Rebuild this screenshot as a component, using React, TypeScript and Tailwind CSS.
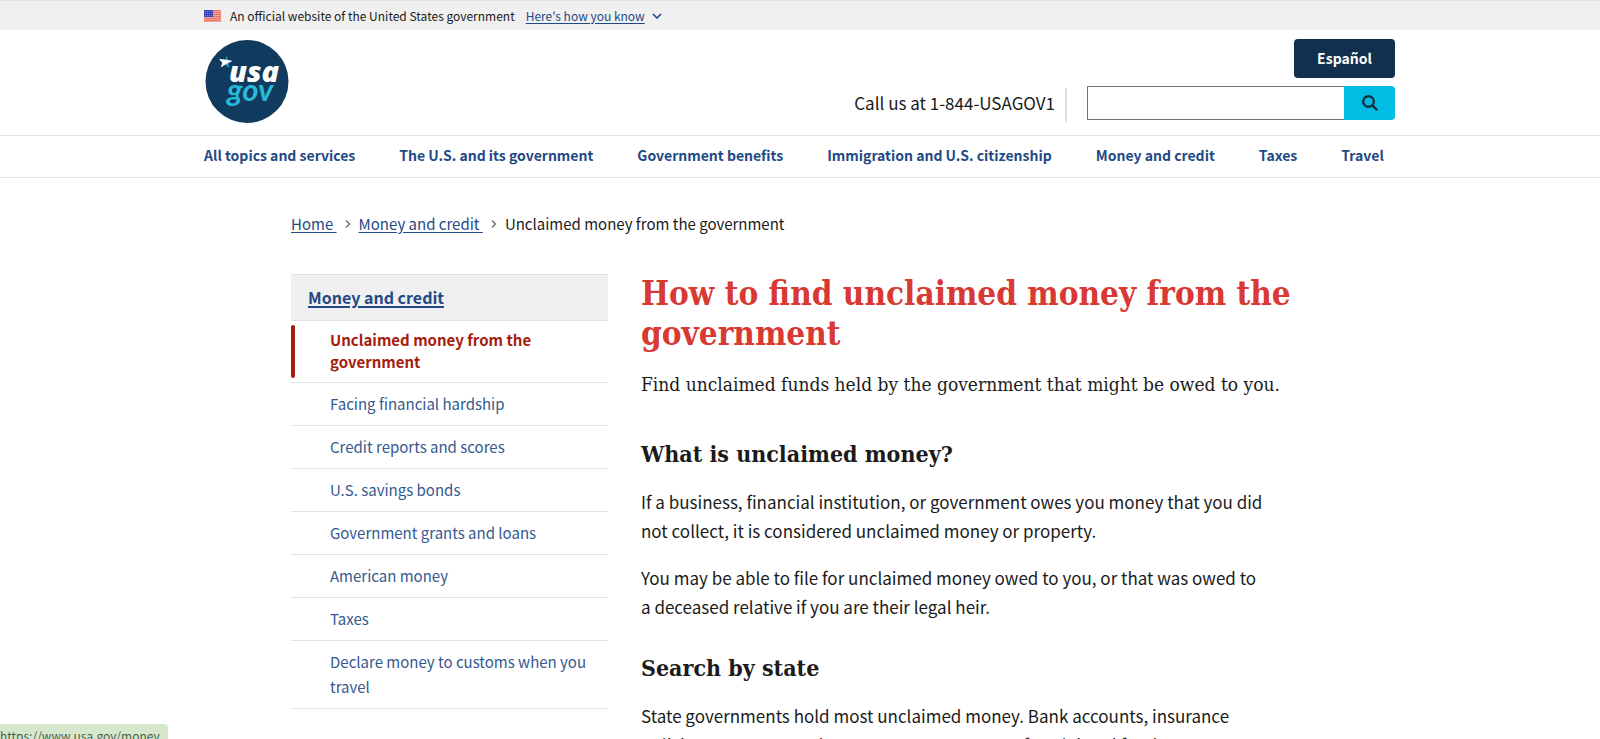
import React from "react";

const navLinks = [
  "All topics and services",
  "The U.S. and its government",
  "Government benefits",
  "Immigration and U.S. citizenship",
  "Money and credit",
  "Taxes",
  "Travel",
];

const sideLinks = [
  "Facing financial hardship",
  "Credit reports and scores",
  "U.S. savings bonds",
  "Government grants and loans",
  "American money",
  "Taxes",
  "Declare money to customs when you travel",
];

const serif = "font-['DejaVu_Serif_Condensed','DejaVu_Serif',serif]";

function Flag() {
  return (
    <svg className="h-3 w-[17px] shrink-0" viewBox="0 0 17 12" aria-hidden="true">
      <rect width="17" height="12" fill="#f6cfc9" />
      {[0, 2, 4, 6, 8, 10].map((y) => (
        <rect key={y} y={y + 0.2} width="17" height="1.2" fill="#e8604f" />
      ))}
      <rect width="9" height="7" fill="#3a46b8" />
      {[1.5, 3.5, 5.5].map((y) =>
        [1.5, 3.5, 5.5, 7.5].map((x) => <circle key={`${x}-${y}`} cx={x} cy={y} r="0.4" fill="#c9cdf2" />)
      )}
    </svg>
  );
}

function Logo() {
  return (
    <svg className="size-[84px]" viewBox="0 0 84 84" role="img" aria-label="USAGov">
      <circle cx="42" cy="42.500" r="41.500" fill="#113a5f" />
      <path d="M21.500 16l1.600 5 3.900.2-3.300 3 .3 4.600-3.500-2.800z" fill="#29a3c4" />
      <path d="M14 20l6 .6 7.500 1.400-5.500 2.600-6.200 4 1.500-4.800z" fill="#fff" />
      <text x="24" y="43" fontSize="29" fontWeight="800" fontStyle="italic" fill="#fff" fontFamily="'Open Sans', sans-serif">usa</text>
      <text x="22" y="62" fontSize="31" fontWeight="700" fontStyle="italic" fill="#29b9d8" fontFamily="Lato, sans-serif">gov</text>
    </svg>
  );
}

function Separator() {
  return (
    <svg className="mx-2 h-2 w-1.5" viewBox="0 0 6 8" fill="none" stroke="#71767a" strokeWidth="1.5" aria-hidden="true">
      <path d="M1 .5l3.500 3.500L1 7.500" />
    </svg>
  );
}

export default function App() {
  return (
    <div className="relative h-screen overflow-hidden bg-white font-['Noto_Sans_CJK_SC',sans-serif] text-[#1b1b1b]">
      <div className="h-[30px] border-t border-[#dfe1e2] bg-[#f0f0f0]">
        <div className="mx-auto flex h-full max-w-[1192px] items-center text-xs">
          <Flag />
          <p className="ml-[9px]">An official website of the United States government</p>
          <button type="button" className="ml-[11px] flex items-center gap-[7px] text-[#1f4a85]">
            <span className="underline underline-offset-2">Here's how you know</span>
            <svg className="h-1.5 w-2.5" viewBox="0 0 10 6" fill="none" stroke="#1f4a85" strokeWidth="1.6" aria-hidden="true">
              <path d="M1 1l4 4 4-4" />
            </svg>
          </button>
        </div>
      </div>

      <header>
        <div className="mx-auto flex h-[105px] max-w-[1192px] justify-between pt-[9px]">
          <a href="#home" className="ml-px h-[84px]">
            <Logo />
          </a>
          <div className="mr-px flex flex-col items-end">
            <button type="button" className="h-[39px] w-[101px] rounded bg-[#112f4e] pb-0.5 text-sm font-bold text-white">
              Español
            </button>
            <div className="mt-2 flex items-start">
              <p className="mt-0.5 flex h-[34px] items-center border-r-2 border-[#dfe1e2] pr-2.5 pb-1 text-[17px]">
                Call us at 1-844-USAGOV1
              </p>
              <form className="ml-5 flex h-[34px]" role="search">
                <input type="search" aria-label="Search" className="w-[257px] border border-r-0 border-[#71767a] px-2 outline-none" />
                <button type="button" aria-label="Search" className="flex w-[51px] items-center justify-center rounded-r bg-[#00bde3]">
                  <svg className="size-4" viewBox="0 0 16 16" fill="none" stroke="#13303f" strokeWidth="2.400" aria-hidden="true">
                    <circle cx="6.500" cy="6.500" r="5.300" />
                    <path d="M10.300 10.300l4.900 4.900" />
                  </svg>
                </button>
              </form>
            </div>
          </div>
        </div>
        <nav aria-label="Primary" className="h-[43px] border-y border-[#dfe1e2]">
          <ul className="mx-auto flex h-full max-w-[1192px] items-center gap-11 pb-1 text-sm font-bold text-[#1f4a85]">
            {navLinks.map((t) => (
              <li key={t}>
                <a href="#topic" className="whitespace-nowrap">{t}</a>
              </li>
            ))}
          </ul>
        </nav>
      </header>

      <div className="mx-auto max-w-[1018px]">
        <nav aria-label="Breadcrumbs" className="mt-[34px] flex h-6 items-center text-[15px]">
          <a href="#home" className="whitespace-pre text-[#1f4a85] underline underline-offset-2">Home </a>
          <Separator />
          <a href="#money" className="whitespace-pre text-[#1f4a85] underline underline-offset-2">Money and credit </a>
          <Separator />
          <span>Unclaimed money from the government</span>
        </nav>

        <div className="mt-[38px] flex items-start gap-[33px]">
          <aside className="w-[317px] shrink-0">
            <a href="#money" className="flex h-[46px] items-center border-t border-[#dfe1e2] bg-[#f0f0f0] pb-0.5 pl-[17px] text-base font-bold text-[#1f4a85] underline decoration-2 underline-offset-2">
              Money and credit
            </a>
            <ul className="text-[15px]">
              <li className="flex h-[62px] items-center border-t border-[#dfe1e2]">
                <span className="h-[53px] w-1 shrink-0 rounded-full bg-[#a61c0c]" />
                <a href="#unclaimed" className="pr-12 pb-0.5 pl-[35px] leading-[22px] font-bold text-[#a61c0c]">
                  Unclaimed money from the government
                </a>
              </li>
              {sideLinks.map((t) => (
                <li key={t} className="border-t border-[#dfe1e2] pt-2 pr-4 pb-[9px] pl-[39px] last:border-b">
                  <a href="#item" className="block leading-[25px] text-[#35598f]">{t}</a>
                </li>
              ))}
            </ul>
          </aside>

          <main className="min-w-0 flex-1">
            <h1 className={`${serif} text-[33px] leading-10 font-bold text-[#d83933]`}>
              How to find unclaimed money from the government
            </h1>
            <p className={`${serif} mt-3.5 text-[19px] leading-8`}>
              Find unclaimed funds held by the government that might be owed to you.
            </p>
            <h2 className={`${serif} mt-[38px] text-[23px] leading-8 font-bold`}>What is unclaimed money?</h2>
            <div className="max-w-[625px] text-[17px] leading-[29px]">
              <p className="mt-[17px]">
                If a business, financial institution, or government owes you money that you did not collect, it is considered unclaimed money or property.
              </p>
              <p className="mt-[18px]">
                You may be able to file for unclaimed money owed to you, or that was owed to a deceased relative if you are their legal heir.
              </p>
            </div>
            <h2 className={`${serif} mt-[31px] text-[23px] leading-8 font-bold`}>Search by state</h2>
            <p className="mt-[17px] max-w-[625px] text-[17px] leading-[29px]">
              State governments hold most unclaimed money. Bank accounts, insurance policies, payments and taxes are some sources of unclaimed funds.
            </p>
          </main>
        </div>
      </div>

      <div className="absolute top-[724px] left-0 rounded-tr bg-[#d5e8cd] pr-2 text-xs leading-6 whitespace-nowrap text-[#4c5f4a]">
        https://www.usa.gov/money
      </div>
    </div>
  );
}
